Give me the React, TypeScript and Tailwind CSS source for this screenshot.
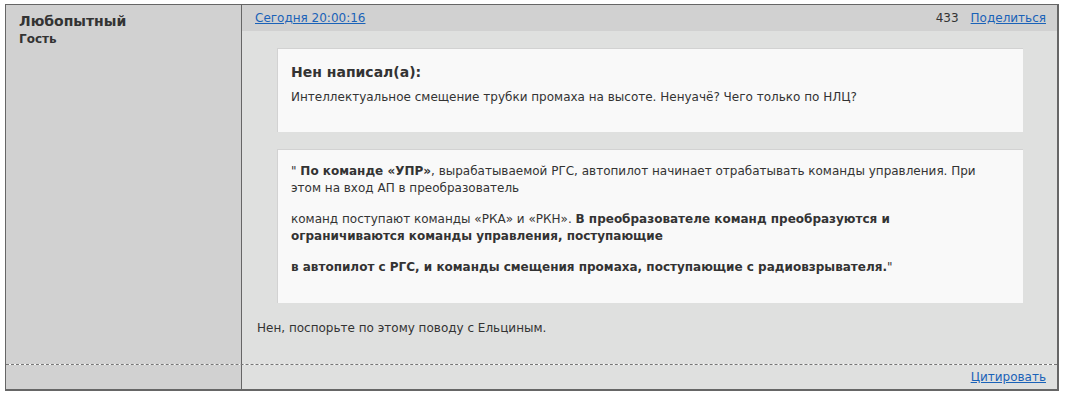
const font = "font-['DejaVu_Sans',Verdana,sans-serif]";

function Quote({ children, className }: { children: React.ReactNode; className?: string }) {
  return (
    <div
      className={`ml-[20px] mr-[34px] border-l border-t border-[#d2d2d2] bg-[#f9f9f9] pl-[13px] pr-[30px] ${className ?? ""}`}
    >
      {children}
    </div>
  );
}

export default function App() {
  return (
    <div className={`min-h-screen bg-white pl-[5px] pt-[4px] text-[#333] ${font}`}>
      <div className="w-[1054px] border-l border-t border-r-2 border-b-2 border-[#666]">
        <div className="grid grid-cols-[236px_1fr] border-b border-dashed border-[#777]">
          <div className="border-r border-[#666] bg-[#d1d1d1] px-[13px] pt-[7px]">
            <div className="text-[14px] font-bold leading-[19px]">Любопытный</div>
            <div className="text-[12px] font-bold leading-[16px]">Гость</div>
          </div>
          <div className="bg-[#dfe0df]">
            <div className="flex h-[26px] items-center justify-between bg-[#d1d1d1] pl-[13px] pr-[11px] text-[12px]">
              <a href="#" className="text-[#1a62b8] underline">
                Сегодня 20:00:16
              </a>
              <div className="flex gap-[12px]">
                <span>433</span>
                <a href="#" className="text-[#1a62b8] underline">
                  Поделиться
                </a>
              </div>
            </div>
            <div className="pb-[27px] pl-[15px] pt-[17px] text-[12px]">
              <Quote className="h-[84px] pt-[13px]">
                <div className="text-[14px] font-bold leading-[20px]">Нен написал(а):</div>
                <p className="mt-[7px] leading-[17px]">
                  Интеллектуальное смещение трубки промаха на высоте. Ненуачё? Чего только по НЛЦ?
                </p>
              </Quote>
              <Quote className="mt-[17px] h-[154px] pt-[13px] leading-[17px]">
                <p>
                  " <b>По команде «УПР»</b>, вырабатываемой РГС, автопилот начинает отрабатывать команды
                  управления. При этом на вход АП в преобразователь
                </p>
                <p className="mt-[14px]">
                  команд поступают команды «РКА» и «РКН». <b>В преобразователе команд преобразуются и
                  ограничиваются команды управления, поступающие</b>
                </p>
                <p className="mt-[14px]">
                  <b>в автопилот с РГС, и команды смещения промаха, поступающие с радиовзрывателя.</b>"
                </p>
              </Quote>
              <p className="mt-[17px] leading-[17px]">Нен, поспорьте по этому поводу с Ельциным.</p>
            </div>
          </div>
        </div>
        <div className="grid h-[24px] grid-cols-[236px_1fr]">
          <div className="border-r border-[#666] bg-[#d1d1d1]" />
          <div className="flex items-center justify-end bg-[#dfe0df] pr-[11px] text-[12px]">
            <a href="#" className="text-[#1a62b8] underline">
              Цитировать
            </a>
          </div>
        </div>
      </div>
    </div>
  );
}
